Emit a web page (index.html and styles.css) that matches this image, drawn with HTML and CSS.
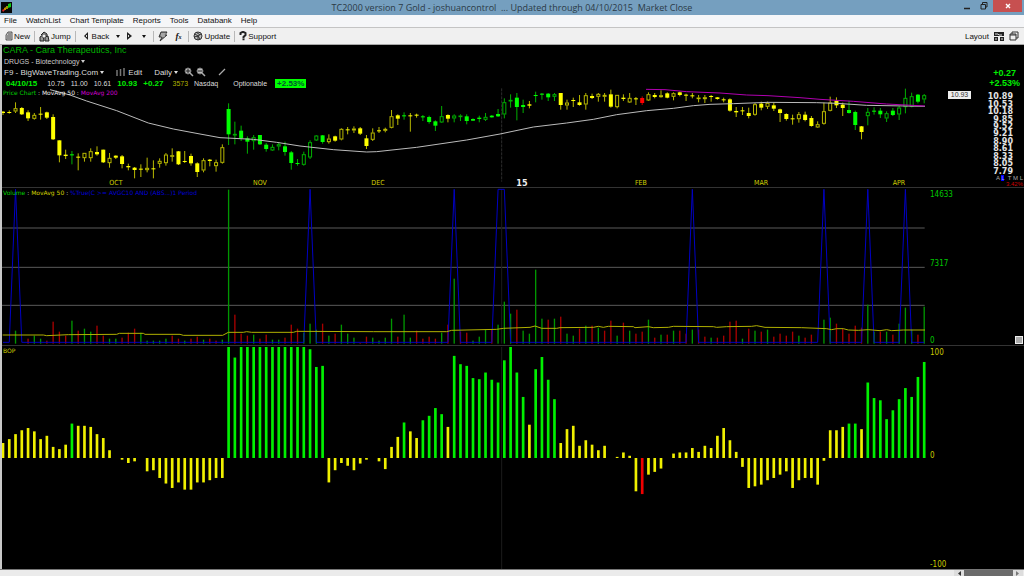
FILE: index.html
```html
<!DOCTYPE html>
<html lang="en">
<head>
<meta charset="utf-8">
<title>TC2000 version 7 Gold</title>
<link rel="stylesheet" href="styles.css">
</head>
<body>
<div class="window">
  <header class="titlebar">
    <svg class="app-icon" viewBox="0 0 11 11" aria-hidden="true"><rect width="11" height="11" fill="#080808"/><path d="M1 8l2-1 1 1-2 2z" fill="#d22"/><path d="M3 6l2-1v3H3z" fill="#c80"/><path d="M5 4h2v3H5z" fill="#990"/><path d="M7 2l3-1v4L7 6z" fill="#1c1"/></svg>
    <h1 class="title">TC2000 version 7 Gold - joshuancontrol &nbsp;... Updated through 04/10/2015 &nbsp;Market Close</h1>
    <div class="window-buttons">
      <button class="win-btn" aria-label="Minimize"><svg width="8" height="8"><path d="M1 6.5h6" stroke="#222" stroke-width="1.5"/></svg></button>
      <button class="win-btn" aria-label="Restore"><svg width="8" height="8"><path d="M1 2.500h4.500v4.500H1zM2.500 2V.5H7V5H6" fill="none" stroke="#222"/></svg></button>
      <button class="win-btn close" aria-label="Close"><svg width="6" height="6"><path d="M1 1l4 4M5 1L1 5" stroke="#fff" stroke-width="1.4"/></svg></button>
    </div>
  </header>

  <nav class="menubar">
    <button>File</button><button>WatchList</button><button>Chart Template</button><button>Reports</button><button>Tools</button><button>Databank</button><button>Help</button>
  </nav>

  <div class="toolbar">
    <button class="tool"><svg width="8" height="10"><path d="M3 1h4v8H1V4zM3 3h3M2 5h4M2 7h4" fill="#ccc" stroke="#333" stroke-width=".8"/></svg>New</button>
    <span class="sep"></span>
    <button class="tool"><svg width="11" height="11"><path d="M2 4l3-3 3 2v3M1 10V6l3-2 1 6zM6 10V6l3-1 1 5z" fill="#999" stroke="#222"/><circle cx="5" cy="5" r="2" fill="#eee" stroke="#333" stroke-width=".7"/></svg>Jump</button>
    <span class="sep"></span>
    <button class="tool spaced"><svg width="6" height="8"><path d="M5 0v8L1 4z" fill="#222"/><path d="M3 3h1v2H3z" fill="#ddd"/></svg>Back</button>
    <button class="tool" aria-label="Back history"><i class="caret"></i></button>
    <button class="tool wide" aria-label="Forward"><svg width="5" height="8"><path d="M0 0v8l5-4z" fill="#222"/><path d="M1 3h1v2H1z" fill="#ddd"/></svg></button>
    <button class="tool wide" aria-label="Forward history"><i class="caret"></i></button>
    <span class="sep"></span>
    <button class="tool" aria-label="Alerts"><svg width="10" height="11"><path d="M3 1h6L7 4h2L2 10l2-4H1z" fill="#888" stroke="#333"/><path d="M3 3h5M3 5h4" stroke="#eee" stroke-width=".6"/></svg></button>
    <button class="tool wide formula" aria-label="Formula"><i>f<sub>x</sub></i></button>
    <span class="sep"></span>
    <button class="tool"><svg width="10" height="10"><circle cx="5" cy="5" r="4" fill="#bbb" stroke="#333"/><path d="M2 3l3 2 3-2M5 5v4M1 6l4-1 2 3M3 1l4 3" stroke="#333" fill="none"/></svg>Update</button>
    <span class="sep"></span>
    <button class="tool"><svg width="8" height="10"><path d="M1.500 4V2q2.500-2 5 0v2L4.500 6v1.500" fill="none" stroke="#222" stroke-width="2"/><path d="M3.500 8.500h2" stroke="#222" stroke-width="1.500"/></svg>Support</button>
    <div class="layout-tools">
      <span>Layout</span>
      <svg width="10" height="9"><path d="M0 0h10v4H0zM0 5h4v4H0zM6 5h4v4H6z" fill="#222"/><path d="M1 2h3l1 1h3M1 7h2M7 7h2" stroke="#ddd" fill="none"/></svg>
      <svg width="10" height="10"><path d="M1 3h6v6H1zM3 3V1h6v6H7M1 4h6" fill="none" stroke="#333"/></svg>
    </div>
  </div>

  <main class="charts">
    <section class="panel price">
      <svg class="plot" id="price-plot" viewBox="6 -120 3066 426" preserveAspectRatio="none"></svg>
      <div class="quote">
        <h2 class="symbol">CARA - Cara Therapeutics, Inc</h2>
        <button class="industry">DRUGS - Biotechnology <i class="caret"></i></button>
        <div class="row controls">
          <button>F9 - BigWaveTrading.Com <i class="caret"></i></button>
          <button class="edit"><svg width="9" height="8"><path d="M1 2v6M4.500 1v7M8 0v8" stroke="#777" stroke-width="1.500"/></svg> Edit</button>
          <button>Daily <i class="caret"></i></button>
          <span class="zooms">
            <svg width="10" height="10"><circle cx="4" cy="4" r="3" fill="#bbb" stroke="#777"/><path d="M2 4h4M4 2v4" stroke="#222"/><path d="M6 6l3 3" stroke="#aaa" stroke-width="1.500"/></svg>
            <svg width="10" height="10"><circle cx="4" cy="4" r="3" fill="#bbb" stroke="#777"/><path d="M2 4h4" stroke="#222"/><path d="M6 6l3 3" stroke="#aaa" stroke-width="1.500"/></svg>
          </span>
          <svg width="8" height="8"><path d="M1 7l6-6" stroke="#aaa" stroke-width="1.300"/></svg>
        </div>
        <div class="row values">
          <b class="date">04/10/15</b><span>10.75</span><span>11.00</span><span>10.61</span><b>10.93</b><b>+0.27</b><span class="volume">3573</span><span>Nasdaq</span><span class="optionable">Optionable</span><b class="badge">+2.53%</b>
        </div>
        <div class="legend"><span class="lime">Price Chart</span> : <span class="white">MovAvg 50</span> : <span class="magenta">MovAvg 200</span></div>
      </div>
      <div class="change"><span>+0.27</span><span>+2.53%</span></div>
      <div class="scale">
        <span>10.89</span><span>10.53</span><span>10.18</span><span>9.85</span><span>9.52</span><span>9.21</span><span>8.90</span><span>8.61</span><span>8.33</span><span>8.05</span><span>7.79</span>
      </div>
      <span class="last-price">10.93</span>
      <div class="scale-modes"><span>A <mark>L</mark> &nbsp;T M L</span><em>3.42%</em></div>
      <div class="months" id="months"></div>
    </section>

    <section class="panel vol">
      <svg class="plot" id="volume-plot" viewBox="6 9 3066 471" preserveAspectRatio="none"></svg>
      <div class="legend"><span class="lime">Volume</span> : <span class="yellow">MovAvg 50</span> : <span class="blue">%True(C &gt;= AVGC10 AND (ABS...)1 Period</span></div>
      <div class="axis green"><span>14633</span><span>7317</span><span>0</span></div>
      <button class="resize" aria-label="Resize pane"></button>
    </section>

    <section class="panel bop">
      <svg class="plot" id="bop-plot" viewBox="6 18 3066 669" preserveAspectRatio="none"></svg>
      <div class="legend"><span class="yellow">BOP</span></div>
      <div class="axis olive"><span>100</span><span>0</span><span>-100</span></div>
    </section>
  </main>

  <footer class="statusbar">
    <button aria-label="Scroll left"><svg width="4" height="5"><path d="M4 0v5L1 2.500z" fill="#333"/></svg></button>
    <div class="thumb"></div>
    <button aria-label="Scroll right"><svg width="4" height="5"><path d="M0 0v5l3-2.500z" fill="#777"/></svg></button>
  </footer>
</div>
<script src="charts.js"></script>
</body>
</html>
```

FILE: styles.css
```css
* { box-sizing: border-box; }
body { margin: 0; background: #000; font-family: "Liberation Sans", Arial, sans-serif; font-size: 8px; }
button { appearance: none; border: 0; margin: 0; padding: 0; background: none; color: inherit; font: inherit; }
h1, h2 { margin: 0; font-weight: 400; }
svg { display: block; flex: none; }

.window { display: flex; flex-direction: column; height: 100vh; min-height: 420px; overflow: hidden; }

.titlebar { display: grid; grid-template-columns: 1fr auto 1fr; align-items: center; height: 15px; background: #759fbf; flex: none; }
.app-icon { width: 11px; height: 11px; margin-left: 1px; }
.title { font: 9px/15px "Open Sans", "Noto Sans", sans-serif; color: #2b3a46; white-space: nowrap; }
.window-buttons { display: flex; justify-content: flex-end; align-self: start; padding-right: 2px; }
.win-btn { display: flex; align-items: center; justify-content: center; width: 17px; height: 12px; }
.win-btn.close { width: 29px; margin-left: 1px; background: #c75050; }

.menubar { display: flex; align-items: center; gap: 9px; height: 12px; padding-left: 4px; background: #f5f6f8; color: #111; flex: none; line-height: 12px; }

.toolbar { display: flex; align-items: center; gap: 4px; height: 18px; padding: 0 5px; background: #f0f0f0; border-top: 1px solid #c4c4c4; border-bottom: 1px solid #a8a8a8; color: #111; flex: none; }
.tool { display: flex; align-items: center; gap: 1px; }
.spaced { gap: 3px; }
.tool.spaced, .wide { margin: 0 3px; }
.sep { width: 1px; height: 11px; background: #b8b8b8; }
.formula { font: bold 9px/10px "Liberation Serif", serif; }
.formula sub { font-size: 6px; vertical-align: baseline; }
.layout-tools { display: flex; align-items: center; gap: 5px; margin-left: auto; }

.caret { display: inline-block; border: 2px solid transparent; border-top: 3px solid currentColor; border-bottom: 0; vertical-align: 1px; }

.charts { display: grid; grid-template-rows: 143fr 158fr 223fr; flex: 1; min-height: 0; border-left: 2px solid #c8c8c8; background: #000; }
.panel { position: relative; min-height: 0; overflow: hidden; border-bottom: 1px solid #333; }
.bop { border-bottom: 0; }
.plot { position: absolute; inset: 0; width: 100%; height: 100%; }

.quote { position: relative; padding-left: 1px; color: #ddd; }
.symbol { color: #00b400; font-size: 9px; line-height: 11px; }
.industry { display: block; height: 10px; padding-left: 1px; font-size: 7px; line-height: 9px; color: #ccc; }
.row { display: flex; align-items: center; }
.controls { gap: 12px; height: 12px; padding-left: 1px; }
.edit { display: flex; align-items: center; gap: 3px; }
.zooms { display: flex; gap: 2px; margin-left: -6px; }
.values { gap: 6px; height: 10px; padding-left: 3px; font-size: 7px; }
.values b { color: #00f000; font-size: 8px; }
.values .date { margin-right: 4px; }
.values .volume { color: #b0b000; margin-left: 3px; }
.values .optionable { margin-left: 9px; }
.values .badge { margin-left: 2px; padding: 0 2px; line-height: 9px; background: #00ff00; color: #053; }

.legend { position: relative; font: 6px/9px "DejaVu Sans", sans-serif; color: #ccc; padding-left: 1px; }
.quote .legend { padding-left: 0; }
.lime { color: #00d000; }
.white { color: #eee; }
.magenta { color: #d000d0; }
.yellow { color: #d0d000; }
.blue { color: #0000d8; }

.change { position: absolute; top: 23px; right: 4px; display: grid; justify-items: center; font-weight: 700; font-size: 9px; line-height: 10px; color: #00f000; }
.scale { position: absolute; top: 48px; right: 11px; bottom: 12px; display: grid; grid-auto-rows: 1fr; align-items: center; justify-items: end; color: #e4e4e4; font: bold 8px/7px "DejaVu Sans", sans-serif; }
.scale span { height: 7px; }
.last-price { position: absolute; top: 46px; right: 53px; width: 23px; text-align: center; background: #eee; color: #333; font: 7px/8px "Liberation Sans", sans-serif; }
.scale-modes { position: absolute; right: 1px; bottom: 0; display: grid; justify-items: end; color: #aaa; font-size: 6px; line-height: 6px; }
.scale-modes mark { background: #00f; color: #99f; }
.scale-modes em { color: #d00000; font-style: normal; }
.months { position: absolute; left: 0; right: 0; bottom: 0; height: 8px; color: #d0d000; font: 7px/8px "DejaVu Sans Condensed", "DejaVu Sans", sans-serif; }
.months span { position: absolute; transform: translateX(-50%); }
.months .year { color: #eee; font-weight: 700; font-size: 9px; }

.axis { position: absolute; top: 2px; bottom: 0; left: 90.8%; display: grid; font: 8px/9px "DejaVu Sans Condensed", "DejaVu Sans", sans-serif; }
.vol .axis { grid-template-rows: 69fr 76fr auto; }
.bop .axis { grid-template-rows: 103fr 110fr auto; }
.green { color: #00c800; }
.olive { color: #c8c800; }
.resize { position: absolute; right: 1px; bottom: 1px; width: 8px; height: 8px; background: #aaa; border: 1px solid #eee; }

.statusbar { display: flex; justify-content: flex-end; height: 7px; padding-right: 1px; border-top: 1px solid #777; background: #ebebeb; flex: none; }
.statusbar button { display: flex; align-items: center; justify-content: center; width: 10px; background: #ddd; }
.thumb { width: 49px; background: #6b6b6b; }
```

FILE: charts.js
```js
const STEP = 18.8;
const barX = i => 9 + i * STEP;
const el = (parent, name, attrs) => {
  const node = document.createElementNS('http://www.w3.org/2000/svg', name);
  for (const key in attrs) node.setAttribute(key, attrs[key]);
  parent.appendChild(node);
};
const line = (parent, points, color, width = 3) =>
  el(parent, 'polyline', { points, fill: 'none', stroke: color, 'stroke-width': width });

// Candles: high, body top, body bottom, low, kind (upper case = filled).
const candles = `78,80,84,90,Y 76,81,84,86,Y 52,70,79,84,y 66,69,88,90,Y 76,82,100,108,Y 84,90,101,104,y 66,86,89,104,Y 80,82,98,102,Y
88,96,163,165,Y 166,166,211,232,Y 194,209,213,222,Y 198,208,211,238,G 205,215,218,256,Y 204,204,219,230,y 190,199,219,230,y 184,201,208,212,Y
194,194,232,234,Y 204,219,234,248,y 211,212,218,222,Y 210,214,237,250,Y 236,243,247,256,Y 246,248,255,280,Y 238,251,254,276,Y 218,249,255,262,y
226,250,252,280,Y 220,228,236,248,y 204,209,234,242,y 190,211,215,230,y 198,199,238,240,Y 198,228,231,234,Y 206,213,235,242,Y 232,235,261,276,Y
220,226,256,262,y 222,224,228,244,Y 224,232,243,260,y 178,187,233,236,y 55,72,148,180,G 110,147,150,178,g 122,137,160,168,G 154,160,170,206,G
150,157,168,194,g 150,150,178,180,G 174,179,192,200,G 178,186,196,198,g 172,178,184,196,g 170,184,201,212,G 198,202,234,254,G 222,234,237,242,G
200,208,239,242,g 166,172,217,222,g 150,152,166,168,g 150,151,171,176,G 148,161,171,176,y 152,154,167,170,Y 130,132,163,166,y 126,133,136,148,Y
124,131,136,144,y 126,130,146,150,Y 150,160,183,192,Y 130,143,164,168,y 126,136,139,144,Y 128,132,137,142,y 75,94,128,130,y 88,91,101,120,Y
82,91,94,104,G 84,91,94,140,Y 86,89,92,98,Y 90,94,97,108,G 92,96,111,116,G 106,109,122,138,G 63,94,112,114,g 88,90,101,112,Y
88,92,100,112,g 88,92,95,108,g 88,94,108,118,G 100,102,107,108,G 92,98,102,112,G 84,96,104,108,g 90,92,97,98,G 72,87,94,96,G
40,52,88,100,g 28,45,48,68,g 24,38,66,106,G 44,60,66,84,G 48,58,62,70,Y 20,30,33,52,G 24,26,29,44,G 24,26,37,48,G
24,28,35,48,g 24,24,60,74,Y 44,53,61,74,y 38,45,48,66,Y 30,52,60,62,Y 24,31,58,74,y 26,33,39,42,Y 24,27,35,50,y
24,30,35,50,y 14,28,65,68,Y 30,30,66,70,y 28,38,42,48,Y 24,39,52,54,y 36,40,43,60,Y 34,39,54,60,R 22,28,46,48,y
24,30,36,40,Y 16,31,36,38,y 22,25,38,40,Y 22,25,35,46,y 20,22,30,34,Y 26,29,32,48,Y 24,31,34,40,Y 30,38,41,52,y
30,37,42,54,y 30,33,36,50,Y 36,37,42,44,Y 38,43,46,52,Y 40,43,77,80,Y 66,78,82,96,Y 66,76,79,90,Y 68,84,93,100,Y
54,58,89,92,y 50,56,68,76,Y 50,54,65,72,y 53,61,71,78,Y 71,73,84,111,Y 85,87,102,107,Y 89,100,103,119,Y 81,88,102,113,y
80,89,105,109,Y 93,99,123,125,Y 109,118,127,129,y 53,79,116,119,y 35,53,77,79,y 37,47,61,69,Y 53,59,69,93,Y 47,75,84,86,G
77,81,120,135,G 123,124,141,163,Y 69,81,93,121,g 67,77,80,89,G 69,77,88,99,G 79,85,100,111,g 69,77,90,93,G 63,68,88,105,g
11,39,66,85,g 23,34,65,67,g 27,29,50,55,G 27,31,43,55,g`.split(/\s+/);

const bright = { Y: '#ffff00', G: '#00ff00', R: '#ff0000' };
const dim = { Y: '#b8b800', G: '#00b000', R: '#c00000' };
const price = document.getElementById('price-plot');
el(price, 'path', { d: 'M1505 10V290', stroke: '#2c2c2c', 'stroke-width': 3, 'stroke-dasharray': '9 3' });
candles.forEach((entry, i) => {
  const [hi, top, bottom, lo, kind] = entry.split(',');
  const key = kind.toUpperCase();
  const x = barX(i);
  if (kind === key) {
    el(price, 'path', { d: `M${x} ${hi}V${lo}`, stroke: dim[key], 'stroke-width': 3 });
    el(price, 'rect', { x: x - 6, y: top, width: 12, height: Math.max(3, bottom - top), fill: bright[key] });
  } else {
    el(price, 'path', { d: `M${x} ${hi}V${top}M${x} ${bottom}V${lo}`, stroke: dim[key], 'stroke-width': 3 });
    el(price, 'rect', { x: x - 4.5, y: +top + 1, width: 9, height: Math.max(2, bottom - top - 2), fill: 'none', stroke: dim[key], 'stroke-width': 3 });
  }
});
line(price, '150,14 210,30 260,48 350,77 445,114 520,132 600,147 660,158 760,163 830,172 900,183 1000,194 1100,201 1130,200 1250,187 1400,165 1500,147 1600,126 1700,114 1780,103 1850,89 1940,77 2020,70 2080,62 2130,58 2200,56 2304,52 2450,53 2510,55 2600,61 2775,64', '#bbbbbb');
line(price, '1938,13 1995,14 2060,20 2160,24 2240,30 2304,32 2400,38 2460,43 2560,49 2660,57 2775,63', '#b000b0');

const months = document.getElementById('months');
[['OCT', 116], ['NOV', 260], ['DEC', 378], ['15', 522], ['FEB', 641], ['MAR', 761], ['APR', 899]].forEach(([text, x]) => {
  const label = document.createElement('span');
  label.textContent = text;
  label.style.left = ((x - 2) / 1022 * 100).toFixed(2) + '%';
  if (text === '15') label.className = 'year';
  months.appendChild(label);
});

// Volume bars: colour letter followed by height.
const volumes = `g0 g0 g13 r0 r5 g8 g5 r3 r22 r12 r8 g23 r13 g15 g12 r18 r8 g5 g5 r6 r11 r15 g11 g3 g3 g3 g5 r8 r5 g3 r5 r7 g4 r5 r3 g4
g154 r29 r10 r8 g9 r5 r9 g4 g4 r6 r19 r15 g11 g20 g14 r20 g8 r10 g19 g10 g6 r1 r7 g6 g3 g6 g25 r7 g29 g6 r13 r5 r7 r5 g11 r19
g65 r12 r11 g3 g7 g14 r14 g19 g42 g30 r34 g13 g10 g74 g25 r24 g25 r27 g10 g8 r15 g18 r18 g16 r13 r23 g8 r21 g13 r10 r12 g24 r6 g9 r9 g13 r13
r10 g14 r14 r7 g6 r6 r8 r22 r23 g5 r15 g13 r12 g14 r7 r10 r8 r12 g8 r6 r9 r0 g24 g26 r20 r15 r10 r18 r16 g39 g12 r12 g12 r9 g20 g36 g14 r9 g37`.split(/\s+/);
const vol = document.getElementById('volume-plot');
el(vol, 'path', { d: 'M6 129H2774M6 247H2774M6 361H2774', stroke: '#5a5a5a', 'stroke-width': 3 });
el(vol, 'path', { d: 'M1505 12V476', stroke: '#1c1c1c', 'stroke-width': 3 });
volumes.forEach((entry, i) => {
  const h = entry.slice(1) * 3;
  el(vol, 'rect', { x: barX(i) - 2, y: 476 - h, width: 4, height: h, fill: entry[0] === 'g' ? '#009600' : '#a80000' });
});
const signals = [2, 49, 72, 79, 80, 110, 131, 138, 144];
line(vol, volumes.map((v, i) => `${barX(i)},${signals.includes(i) ? 13 : 472}`).join(' '), '#0000c4');
line(vol, '8,450 130,450 140,452 205,449 350,448 358,445 430,445 435,448 540,448 550,451 668,451 685,442 730,442 740,440 755,442 880,442 890,439 1120,440 1340,440 1355,436 1490,433 1510,430 1590,427 1605,423 1625,430 1670,430 1680,428 1780,427 1795,424 1810,427 1825,424 1900,425 1905,428 1945,425 1960,428 2005,427 2020,424 2140,425 2150,427 2180,425 2255,424 2270,422 2295,427 2405,428 2480,431 2495,434 2510,431 2530,431 2545,435 2575,436 2605,434 2640,437 2660,434 2675,437 2710,435 2775,435', '#b0b000');

// Balance of power, -100 to 100.
const bop = [13.5,17,21.5,25,27,24,17,20,10,8,12,31,29,29,28,21.5,18,7,0,-1.5,-4.5,-3,0,-12,-11,-18,-23,-27,-22,-28.5,-28.5,-22,-22,-20,-18,-18,
100,90.5,100,100,100,100,100,100,100,100,100,100,100,98,82,83,-22,-11,-4.5,-7,-11,-5,-1.5,0,-3,-10,10,19,32,24,18,34,38,45,39.5,28,
92,84.5,83,72,71,77,70.5,68,88,100,77,55,30,80,91,70.5,53,13.5,26,29,11,16,12,7,11,0,1,5,2,-30,-32.5,-15,-12.5,-9.5,0,4,5,
5,9,5.5,11,9,20,27,16,5.5,-8,-27,-25.5,-24,-20,-18,-15,-12,-27,-20,-18,-18,-24,-2.5,25,25,28,31,31,26,68,54,52,35,43,53,63,55,73,86.5];
const bopPlot = document.getElementById('bop-plot');
el(bopPlot, 'path', { d: 'M1505 21V687', stroke: '#1c1c1c', 'stroke-width': 3 });
bop.forEach((value, i) => {
  const h = Math.abs(value) * 3.33;
  const fill = value > 30 ? '#00f000' : value < -30 ? '#f00000' : '#f0f000';
  el(bopPlot, 'rect', { x: barX(i) - 4, y: value > 0 ? 354 - h : 354, width: 8, height: h, fill });
});
```
